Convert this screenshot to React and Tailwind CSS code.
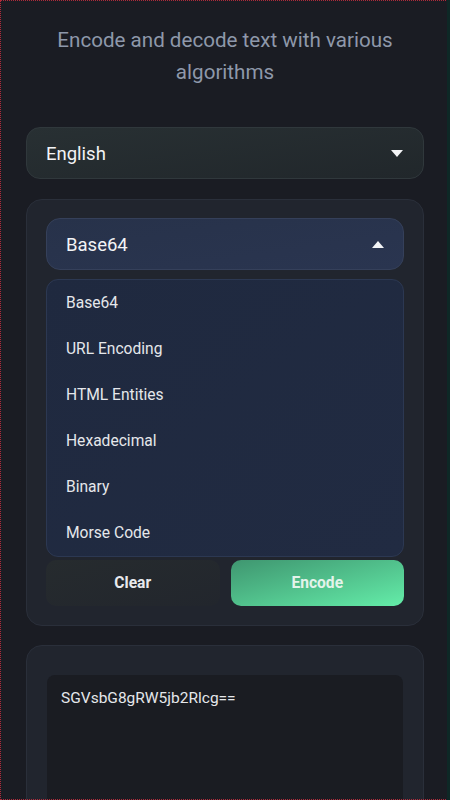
import React from "react";

const Caret = ({ up }) => (
  <svg width="12" height="7" viewBox="0 0 12 7" className="shrink-0">
    {up ? <path d="M0 7 L6 0 L12 7 Z" fill="#f3f4f6" /> : <path d="M0 0 L12 0 L6 7 Z" fill="#f3f4f6" />}
  </svg>
);

const items = ["Base64", "URL Encoding", "HTML Entities", "Hexadecimal", "Binary", "Morse Code"];

export default function App() {
  return (
    <div
      className="h-[800px] w-full overflow-hidden bg-[#1a1c23] text-white"
      style={{ fontFamily: "Roboto, 'Noto Sans', sans-serif" }}
    >
      <div className="pointer-events-none fixed inset-0 z-20 border border-dotted border-[#b02a3a]" />
      <div className="pointer-events-none fixed right-0 top-0 bottom-0 z-20 w-[3px] bg-[#0e2826]" />
      <div className="px-[26px]">
        <p className="pt-[24px] text-center text-[20.6px] leading-[32px] text-[#8e98aa] px-6">
          Encode and decode text with various algorithms
        </p>

        <div className="mt-[39px] flex h-[52px] items-center justify-between rounded-[14px] border border-[#30383c] bg-gradient-to-br from-[#283033] to-[#21272b] pl-[19px] pr-[20px]">
          <span className="pt-[3px] text-[18.5px] text-[#f3f4f6]">English</span>
          <Caret />
        </div>

        <div className="mt-[20px] rounded-[16px] border border-[#2a2f3a] bg-[#21252e] px-[19px] pt-[18px] pb-[19px]">
          <div className="relative">
            <div className="flex h-[52px] items-center justify-between rounded-[14px] border border-[#35405a] bg-gradient-to-br from-[#27324a] to-[#2a3550] pl-[19px] pr-[19px]">
              <span className="pt-[3px] text-[18.5px] text-[#f3f4f6]">Base64</span>
              <Caret up />
            </div>
            <div className="absolute left-0 right-0 top-[61px] z-10 flex flex-col rounded-[12px] border border-[#2c3852] bg-gradient-to-br from-[#1f293f] to-[#212b42]">
              {items.map((t) => (
                <div key={t} className="flex h-[46px] items-center pl-[19px] pt-[1px] text-[15.6px] text-[#e5e7eb]">
                  {t}
                </div>
              ))}
            </div>
          </div>
          <div className="mt-4 h-[258px] rounded-[8px] bg-[#1a1c22]" />
          <div className="mt-4 grid grid-cols-2 gap-[11px]">
            <button className="h-[46px] rounded-[10px] bg-gradient-to-br from-[#262b2e] to-[#22262d] pt-[2px] text-[15.6px] font-bold text-[#e8eaed]">
              Clear
            </button>
            <button className="h-[46px] rounded-[10px] bg-gradient-to-br from-[#3f9670] to-[#64eda9] pt-[2px] text-[15.6px] font-bold text-[#e3f3ea]">
              Encode
            </button>
          </div>
        </div>

        <div className="mt-[19px] h-[200px] rounded-[16px] border border-[#2a2f3a] bg-[#21252e] px-[20px] pt-[29px]">
          <div className="h-[200px] rounded-[8px] bg-[#1a1c22] px-[14px] pt-[12px] text-[15.5px] text-[#e5e7eb]">
            SGVsbG8gRW5jb2Rlcg==
          </div>
        </div>
      </div>
    </div>
  );
}
